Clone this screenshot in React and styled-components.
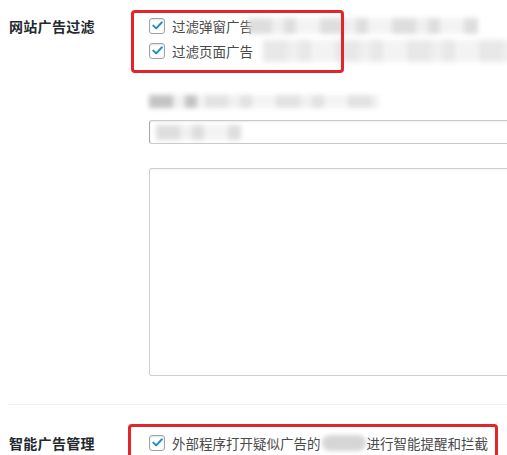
import styled, { createGlobalStyle } from 'styled-components';

const GlobalStyle = createGlobalStyle`
  html, body {
    margin: 0;
    background: #fff;
    overflow: hidden;
  }
  body {
    font-family: "Noto Sans CJK SC", "Noto Sans", sans-serif;
    color: #444;
  }
`;

function CheckIcon() {
  return (
    <svg width="11" height="9" viewBox="0 0 11 9">
      <path
        d="M1.3 4.6 L4.2 7.4 L9.8 1.4"
        fill="none"
        stroke="#1e8cbe"
        strokeWidth="2"
        strokeLinecap="round"
        strokeLinejoin="round"
      />
    </svg>
  );
}

function Option({ children, smudge }) {
  return (
    <OptionRow>
      <Check>
        <CheckIcon />
      </Check>
      <OptionText>{children}</OptionText>
      {smudge}
    </OptionRow>
  );
}

function App() {
  return (
    <Page>
      <GlobalStyle />

      <Row>
        <Label>网站广告过滤</Label>
        <Field>
          <Options $top={13}>
            <Marker $left={-18} $top={-3} $width={213} $height={63} />
            <Option smudge={<Smudge $w={230} $h={16} $tone="#d9d9d9" $shift={-5} />}>
              过滤弹窗广告
            </Option>
            <Option smudge={<Smudge $w={250} $h={22} $tone="#e4e4e4" $shift={10} />}>
              过滤页面广告
            </Option>
          </Options>

          <Hint>
            <Smudge $w={55} $h={13} $tone="#b9b9b9" />
            <Smudge $w={175} $h={13} $tone="#dddddd" />
          </Hint>

          <TextInput>
            <Smudge $w={85} $h={15} $tone="#d8d8d8" />
          </TextInput>

          <TextArea />
        </Field>
      </Row>

      <Divider />

      <Row $pad={25}>
        <Label $top={3}>智能广告管理</Label>
        <Field>
          <Options $top={0}>
            <Marker $left={-21} $top={-6} $width={370} $height={80} />
            <Option>
              外部程序打开疑似广告的
              <InlineSmudge />
              进行智能提醒和拦截
            </Option>
            <SecondLine>
              <Smudge $w={300} $h={12} $tone="#e0e0e0" />
            </SecondLine>
          </Options>
        </Field>
      </Row>
    </Page>
  );
}

export default App;

const Page = styled.div`
  width: 507px;
  height: 455px;
  overflow: hidden;
`;

const Row = styled.div`
  display: grid;
  grid-template-columns: 149px 1fr;
  padding-top: ${p => p.$pad || 0}px;
`;

const Label = styled.div`
  padding: ${p => (p.$top ?? 16)}px 0 0 9px;
  font-size: 14px;
  font-weight: 700;
  line-height: 20px;
  color: #23282d;
  letter-spacing: 0.3px;
`;

const Field = styled.div`
  display: flex;
  flex-direction: column;
  min-width: 0;
`;

const Options = styled.div`
  position: relative;
  margin-top: ${p => p.$top}px;
  display: flex;
  flex-direction: column;
`;

const Marker = styled.div`
  position: absolute;
  left: ${p => p.$left}px;
  top: ${p => p.$top}px;
  width: ${p => p.$width}px;
  height: ${p => p.$height}px;
  border: 3px solid #e3242b;
  border-radius: 4px;
  box-sizing: border-box;
  pointer-events: none;
  z-index: 2;
`;

const OptionRow = styled.label`
  display: flex;
  align-items: center;
  height: 25px;
  white-space: nowrap;
`;

const Check = styled.span`
  flex: none;
  width: 16px;
  height: 16px;
  box-sizing: border-box;
  border: 1px solid #9ea3a8;
  border-radius: 3px;
  background: #fff;
  box-shadow: inset 0 1px 2px rgba(0, 0, 0, 0.12);
  display: flex;
  align-items: center;
  justify-content: center;
  margin-right: 7px;
`;

const OptionText = styled.span`
  font-size: 13.5px;
  line-height: 20px;
  color: #4a4a4a;
  display: flex;
  align-items: center;
`;

const Smudge = styled.span`
  display: inline-block;
  flex: none;
  width: ${p => p.$w}px;
  height: ${p => p.$h}px;
  margin-left: ${p => p.$shift || 0}px;
  background: repeating-linear-gradient(
    90deg,
    ${p => p.$tone} 0 24px,
    #eeeeee 24px 36px,
    ${p => p.$tone} 36px 48px,
    #f2f2f2 48px 72px
  );
  filter: blur(2.5px);
  opacity: 0.85;
`;

const InlineSmudge = styled.span`
  display: inline-block;
  width: 44px;
  height: 16px;
  margin: 0 1px;
  background: #d6d6d6;
  border-radius: 8px;
  filter: blur(2px);
`;

const Hint = styled.div`
  display: flex;
  margin-top: 32px;
  height: 13px;
`;

const TextInput = styled.div`
  margin-top: 12px;
  width: 400px;
  height: 24px;
  box-sizing: border-box;
  border: 1px solid #c9c9c9;
  border-left-color: #a9a9a9;
  border-radius: 3px;
  box-shadow: inset 0 1px 2px rgba(0, 0, 0, 0.07);
  display: flex;
  align-items: center;
  padding-left: 6px;
`;

const TextArea = styled.div`
  margin-top: 24px;
  width: 400px;
  height: 208px;
  box-sizing: border-box;
  border: 1px solid #cfcfcf;
  border-radius: 2px;
  box-shadow: inset 0 1px 2px rgba(0, 0, 0, 0.05);
`;

const Divider = styled.div`
  margin: 28px 0 0 8px;
  border-top: 1px solid #f0f0f0;
`;

const SecondLine = styled.div`
  padding: 5px 0 0 23px;
`;
